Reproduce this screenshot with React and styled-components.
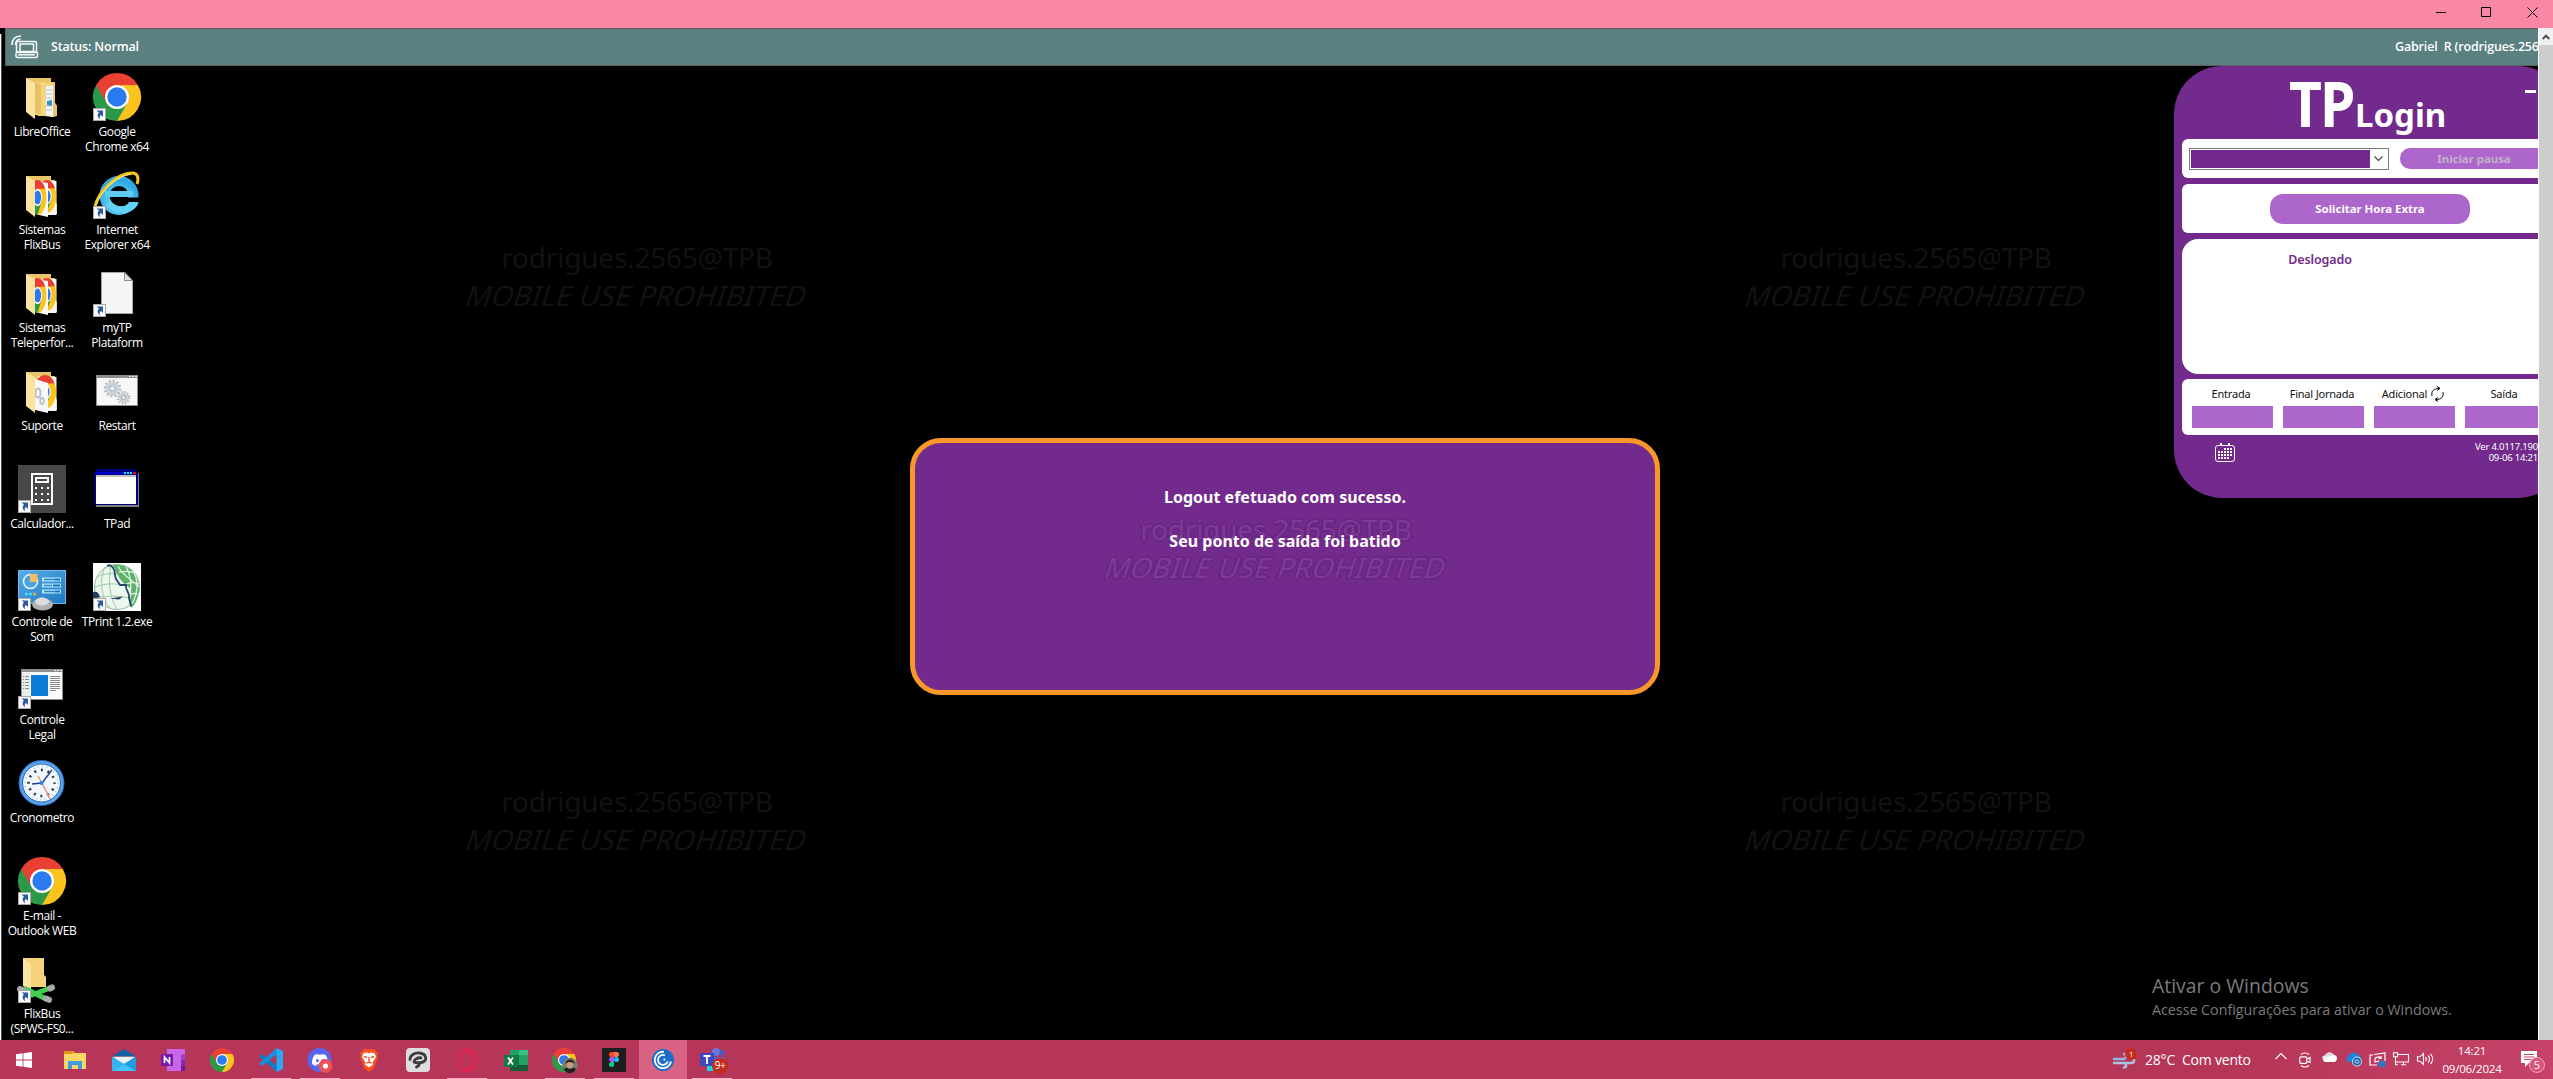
import React from 'react';
import styled, { createGlobalStyle, css } from 'styled-components';
import { SiDiscord } from 'react-icons/si';

const GlobalStyle = createGlobalStyle`
  *, *::before, *::after { box-sizing: border-box; }
  body { margin: 0; background: #000; overflow: hidden; }
  svg { display: block; flex: none; overflow: visible; }
`;

const ui = `'Open Sans', 'Noto Sans', sans-serif`;
const tahoma = `'Noto Sans', 'Open Sans', sans-serif`;
const PURPLE = '#722a8c';
const LILAC = '#ad66cb';

/* ---------- window frame ---------- */

const Screen = styled.div`
  display: flex;
  flex-direction: column;
  width: 2553px;
  height: 1079px;
  background: #000;
  font-family: ${ui};
  overflow: hidden;
`;

const TitleBar = styled.header`
  flex: none;
  display: flex;
  justify-content: flex-end;
  align-items: flex-start;
  gap: 35px;
  height: 28px;
  padding: 7px 15px 0 0;
  background: #f987a5;
`;

const Viewport = styled.div`
  flex: 1;
  min-height: 0;
  display: flex;
`;

const LeftEdge = styled.div`
  flex: none;
  width: 5px;
  padding-top: 6px;
  &::before {
    content: '';
    display: block;
    width: 2px;
    height: 100%;
    background: #fff;
    border-right: 1px solid #4a4f4f;
  }
`;

const Session = styled.main`
  flex: 1;
  min-width: 0;
  display: flex;
  flex-direction: column;
  overflow: hidden;
`;

const Scrollbar = styled.div`
  flex: none;
  display: flex;
  flex-direction: column;
  width: 15px;
  border-left: 1px solid #fff;
  background: #cdcdcd;
`;

const ScrollButton = styled.div`
  display: flex;
  align-items: center;
  justify-content: center;
  height: 17px;
  background: #f0f0f0;
`;

const StatusBar = styled.div`
  flex: none;
  display: flex;
  align-items: center;
  height: 38px;
  padding-left: 5px;
  background: #5a8080;
  border: 1px solid #5e5e5e;
  border-right: 0;
  overflow: hidden;
`;

const StatusText = styled.span`
  margin-left: 12px;
  color: #fff;
  font: 600 12.5px/18px ${ui};
  letter-spacing: -0.17px;
  white-space: pre;
`;

const UserText = styled(StatusText)`
  margin-left: auto;
  flex: none;
  width: 143px;
  overflow: hidden;
`;

/* ---------- desktop ---------- */

const Desktop = styled.div`
  position: relative;
  flex: 1;
  min-height: 0;
  overflow: hidden;
`;

const IconGrid = styled.div`
  display: grid;
  grid-auto-flow: column;
  grid-template-rows: repeat(10, 98px);
  grid-auto-columns: 75px;
  padding-top: 7px;
`;

const Shortcut = styled.div`
  display: flex;
  flex-direction: column;
  align-items: center;
  padding-right: 1px;
`;

const ShortcutLabel = styled.span`
  margin: 3px -6px 0;
  color: #fff;
  font: 400 12px/15px ${ui};
  letter-spacing: -0.42px;
  text-align: center;
  white-space: pre;
`;

const Mark = styled.div`
  position: absolute;
  left: ${(p) => p.$x - 5}px;
  top: ${(p) => p.$y - 66}px;
  width: 360px;
  margin-left: -180px;
  text-align: center;
  white-space: nowrap;
  color: ${(p) => (p.$tint ? '#7d3a96' : '#121212')};
  ${(p) => p.$tint && css`
    text-shadow: 2px 0 #6a2683, -2px 0 #6a2683, 0 2px #6a2683, 0 -2px #6a2683,
      1px 1px #6a2683, -1px 1px #6a2683, 1px -1px #6a2683, -1px -1px #6a2683;
  `}
`;

const MarkUser = styled.div`
  font: 400 28px/38px ${tahoma};
  letter-spacing: -0.2px;
`;

const MarkRule = styled.div`
  font: 400 28px/38px ${tahoma};
  letter-spacing: 0.15px;
  transform: skewX(-18deg);
`;

const Dialog = styled.section`
  position: absolute;
  left: 905px;
  top: 372px;
  width: 750px;
  height: 257px;
  border: 5px solid #f9972b;
  border-radius: 31px;
  background: ${PURPLE};
`;

const DialogText = styled.div`
  position: absolute;
  left: 905px;
  top: 420px;
  width: 750px;
  display: flex;
  flex-direction: column;
  gap: 22px;
  text-align: center;
  color: #fff;
  font: 700 16px/22px ${tahoma};
`;

const Activate = styled.div`
  position: absolute;
  left: 2147px;
  top: 905px;
  color: #7b7b7b;
  white-space: nowrap;
`;

const ActivateTitle = styled.div`
  font: 400 19.4px/30px ${ui};
`;

const ActivateHint = styled.div`
  font: 400 14.25px/17px ${ui};
`;

/* ---------- TP Login ---------- */

const LoginWindow = styled.section`
  position: absolute;
  left: 2169px;
  top: 0;
  width: 392px;
  height: 432px;
  padding: 0 8px;
  display: flex;
  flex-direction: column;
  border-radius: 48px;
  background: ${PURPLE};
  color: #fff;
  font-family: ${tahoma};
`;

const LoginHeader = styled.div`
  display: flex;
  align-items: flex-start;
  height: 73px;
  padding-left: 107px;
`;

const Brand = styled.span`
  width: 66px;
  font: 700 62px/62px ${tahoma};
  letter-spacing: -2px;
  padding-top: 6px;
  transform: scaleX(0.92);
  transform-origin: left;
`;

const BrandSub = styled.span`
  font: 700 33px/40px ${tahoma};
  padding-top: 29px;
`;

const Minimise = styled.span`
  margin: 24px 22px 0 auto;
  width: 11px;
  height: 3px;
  background: #fff;
`;

const Panel = styled.div`
  display: flex;
  gap: ${(p) => p.$cols || 0}px;
  height: ${(p) => p.$h}px;
  margin-bottom: ${(p) => p.$gap}px;
  padding: ${(p) => p.$pad || '0'};
  border-radius: ${(p) => p.$r || 6}px;
  background: #fff;
`;

const Select = styled.div`
  display: flex;
  width: 200px;
  height: 22px;
  padding: 1px;
  border: 1px solid #7a7a7a;
  background: #fff;
`;

const SelectValue = styled.div`
  width: 179px;
  background: ${PURPLE};
`;

const SelectArrow = styled.div`
  flex: 1;
  display: flex;
  align-items: center;
  justify-content: center;
`;

const Pill = styled.button`
  width: ${(p) => p.$w}px;
  height: ${(p) => p.$h}px;
  padding: 0;
  border: 0;
  border-radius: ${(p) => p.$r}px;
  background: ${LILAC};
  color: ${(p) => (p.disabled ? '#c3b3c9' : '#fff')};
  font: 700 11.4px/14px ${tahoma};
`;

const State = styled.span`
  width: 276px;
  color: ${PURPLE};
  text-align: center;
  font: 600 12.5px/18px ${tahoma};
  letter-spacing: -0.1px;
`;

const Slot = styled.div`
  display: flex;
  flex-direction: column;
  width: 81px;
`;

const SlotLabel = styled.span`
  display: flex;
  justify-content: center;
  align-items: center;
  gap: 4px;
  height: 24px;
  padding: 6px 3px 0 0;
  color: #111;
  font: 400 11px/14px ${tahoma};
  letter-spacing: -0.2px;
  white-space: nowrap;
`;

const SlotValue = styled.div`
  height: 22px;
  margin-top: 3px;
  background: ${LILAC};
`;

const LoginFooter = styled.div`
  display: flex;
  justify-content: space-between;
  padding: 8px 20px 0 33px;
`;

const Version = styled.div`
  margin-top: -2px;
  text-align: right;
  font: 400 9.5px/11px ${tahoma};
  letter-spacing: -0.2px;
`;

/* ---------- taskbar ---------- */

const Taskbar = styled.footer`
  flex: none;
  display: flex;
  height: 39px;
  background: linear-gradient(90deg, #b63659 0, #b63659 2250px, #c64268 2553px);
`;

const Pinned = styled.div`
  display: flex;
  gap: 1px;
`;

const TaskButton = styled.div`
  display: flex;
  align-items: center;
  justify-content: center;
  width: 48px;
  margin-right: ${(p) => (p.$wide ? 2 : 0)}px;
  padding-top: 1px;
  background: ${(p) => (p.$active ? '#d76283' : 'transparent')};
  ${(p) => p.$open && css`
    background: linear-gradient(#f4b3c6, #f4b3c6) center bottom / 40px 1px no-repeat;
  `}
`;

const Tray = styled.div`
  display: flex;
  align-items: center;
  margin-left: auto;
  padding-right: 2px;
  color: #fff;
`;

const Weather = styled.div`
  display: flex;
  align-items: center;
  gap: 9px;
  width: 158px;
  font: 400 14px/20px ${ui};
  letter-spacing: -0.2px;
  white-space: pre;
`;

const TrayIcons = styled.div`
  display: flex;
  width: 168px;
  margin-left: -2px;
`;

const TrayCell = styled.div`
  display: flex;
  justify-content: center;
  width: 24px;
`;

const Clock = styled.div`
  width: 72px;
  padding-right: 2px;
  text-align: center;
  font: 400 11.5px/17.5px ${ui};
  letter-spacing: -0.2px;
`;

const Notices = styled.div`
  display: flex;
  justify-content: center;
  width: 42px;
`;

/* ---------- drawings ---------- */

const Arrow = () => (
  <g>
    <rect x="0.5" y="35.5" width="12" height="12" fill="#fafafa" stroke="#a9a9a9" />
    <path d="M3.6 37.4H10V44l-2-2c-1.400 1-1.600 2.400-1 4.200-2.800-1.800-3-4.700-1-6.600z" fill="#2d5a9e" />
  </g>
);

const ChromeDisc = () => (
  <g>
    <path d="M24 24L3.200 12A24 24 0 0 1 44.800 12z" fill="#ea4033" />
    <path d="M24 24L44.800 12A24 24 0 0 1 24 48z" fill="#fcc31e" />
    <path d="M24 24L24 48A24 24 0 0 1 3.200 12z" fill="#2a9a48" />
    <path d="M24 12H44.800L34.400 30z" fill="#fcc31e" />
    <path d="M3.200 12L13.600 30 24 24 20 14z" fill="#2a9a48" />
    <path d="M3.200 12L13.600 30 16 16 30 12z" fill="#ea4033" />
    <path d="M34.400 30L24 48 13.600 30z" fill="#2a9a48" />
    <circle cx="24" cy="24" r="12" fill="#fff" />
    <circle cx="24" cy="24" r="9.700" fill="#2b7bf0" />
  </g>
);

const ChromeIcon = ({ size = 48, link }) => (
  <svg width={size} height={size} viewBox="0 0 48 48">
    <ChromeDisc />
    {link && <Arrow />}
  </svg>
);

const ClippedSvg = styled.svg`
  overflow: hidden;
`;

const FolderIcon = ({ kind }) => (
  <svg width="48" height="48" viewBox="0 0 48 48">
    <path d="M8 5H33V9H37V30L39 33V43H20z" fill="#e9c566" />
    {kind === 'docs' && (
      <g>
        <path d="M17 9l18 1v34l-18-2z" fill="#f3d582" />
        <path d="M17 9l6 3v30l-6-2z" fill="#e6c263" />
        <path d="M28 13h7v31l-7-2z" fill="#f1f5f8" />
        <path d="M28 17h6M28 21h6M28 25h6M28 33h6M28 37h6" stroke="#b7c2cc" />
        <path d="M29 28l5-1v6l-5-1z" fill="#2d8fc4" />
        <path d="M35 11h2v19l2 3v10l-4 1z" fill="#e9c566" />
      </g>
    )}
    {kind === 'chrome' && (
      <g>
        <path d="M17 10L38.500 10V44H30L17 40z" fill="#f5f5f5" />
        <g transform="translate(19.500 9) scale(.39 .68)"><ChromeDisc /></g>
        <path d="M17 10l13 2v34l-13-3z" fill="#f8f8f8" />
        <ClippedSvg x="17" y="9" width="12.500" height="35" viewBox="14 0 34 48" preserveAspectRatio="none">
          <g transform="translate(-3 0)"><ChromeDisc /></g>
        </ClippedSvg>
      </g>
    )}
    {kind === 'gears' && (
      <g>
        <path d="M20 9L38.500 10V44H28z" fill="#f5f5f5" />
        <g transform="translate(16 8) scale(.46 .7)"><ChromeDisc /></g>
        <path d="M17 12l13 4v30l-13-3z" fill="#f8f8f8" />
        <ellipse cx="20" cy="26" rx="2.500" ry="4.500" fill="none" stroke="#b9c3cb" strokeWidth="2" />
        <ellipse cx="24" cy="34" rx="1.800" ry="3" fill="none" stroke="#b9c3cb" strokeWidth="1.800" />
      </g>
    )}
    <path d="M8 5l9 5v36L8 39z" fill="#fde3a0" />
  </svg>
);

const InternetIcon = () => (
  <svg width="48" height="48" viewBox="0 0 48 48">
    <defs>
      <radialGradient id="ie" cx=".5" cy=".7" r=".7">
        <stop offset="0" stopColor="#8aeaff" />
        <stop offset="1" stopColor="#2fa8e4" />
      </radialGradient>
    </defs>
    <circle cx="26" cy="24.500" r="14.500" fill="none" stroke="url(#ie)" strokeWidth="10" />
    <path d="M12 20h28v6H12z" fill="#5ecbf2" />
    <path d="M17 26.500H46.500V31H38c-2 3-5 4.500-9 4.500-6 0-11-4-12-9z" fill="#000" />
    <path d="M13 33c4 11 26 13 32 0l.3-2H36c-3 6-14 6-19 0z" fill="#63d4f7" />
    <path d="M2 36C4 22 24 2 39 2c6 0 7 5 5 11" fill="none" stroke="#f7c81c" strokeWidth="3" />
    <path d="M4 33C7 21 25 4 38 3.500" fill="none" stroke="#fff08a" strokeWidth="1" />
    <Arrow />
  </svg>
);

const PageIcon = () => (
  <svg width="48" height="48" viewBox="0 0 48 48">
    <path d="M8.500 3.500H32l7.500 8V44.500h-31z" fill="#f4f5f7" stroke="#a5a5a5" />
    <path d="M31.500 3.500v8h8z" fill="#ddd" stroke="#8d8d8d" />
    <Arrow />
  </svg>
);

const Gear = ({ cx, cy, r }) => (
  <g>
    <circle cx={cx} cy={cy} r={r} fill="none" stroke="#aeb8bf" strokeWidth="3" strokeDasharray={`${r * 0.26} ${r * 0.2636}`} />
    <circle cx={cx} cy={cy} r={r * 0.66} fill="none" stroke="#ccd3d8" strokeWidth={r * 0.55} />
    <circle cx={cx} cy={cy} r={r * 0.36} fill="#fafafa" stroke="#98a4ac" />
  </g>
);

const RestartIcon = () => (
  <svg width="48" height="48" viewBox="0 0 48 48">
    <rect x="3.500" y="8.500" width="41" height="30" fill="#f7f7f7" stroke="#8b8e91" />
    <path d="M3 8h42v3H3z" fill="#8b8e91" />
    <path d="M36 9.500h8" stroke="#e8e8e8" strokeDasharray="2 1" />
    <Gear cx={19.500} cy={21.500} r={7.300} />
    <Gear cx={30.500} cy={30.500} r={5.300} />
  </svg>
);

const CalculatorIcon = () => (
  <svg width="48" height="48" viewBox="0 0 48 48">
    <path d="M0 0h48v48H0z" fill="#484848" />
    <path d="M14 9h20v30H14z" fill="none" stroke="#fff" strokeWidth="2" />
    <path d="M18 13h12v4H18z" fill="none" stroke="#fff" strokeWidth="2" />
    <path d="M17 23h14M17 29h14M17 35h14" stroke="#fff" strokeWidth="2" strokeDasharray="2 4" />
    <Arrow />
  </svg>
);

const TPadIcon = () => (
  <svg width="48" height="48" viewBox="0 0 48 48">
    <path d="M3 8h43v34H3z" fill="#7d7d7d" />
    <path d="M3 4h40v3h2v33H1V7h2z" fill="#00007f" />
    <path d="M3 10h40v29H3z" fill="#fff" />
    <path d="M3 10h40v2H3z" fill="#c3c3c3" />
    <path d="M4 8h27" stroke="#0000e6" strokeWidth="2" strokeDasharray="3 1" />
    <path d="M31 8h9" stroke="#00f0ff" strokeWidth="2" strokeDasharray="2 1" />
    <path d="M40 8h3" stroke="#f00" strokeWidth="2" />
  </svg>
);

const SoundPanelIcon = () => (
  <svg width="48" height="48" viewBox="0 0 48 48">
    <defs>
      <linearGradient id="snd" x2="1" y2="1">
        <stop offset="0" stopColor="#55aee6" />
        <stop offset="1" stopColor="#2179c0" />
      </linearGradient>
    </defs>
    <rect x=".5" y="7.500" width="47" height="33" fill="url(#snd)" stroke="#6dbcf0" />
    <circle cx="12.500" cy="18.500" r="7" fill="#4ba3dc" stroke="#e9f6ff" strokeWidth="1.500" />
    <path d="M12 11h7.500v8H12z" fill="#f8bb65" />
    <path d="M24 16.500h19M24 22.500h19M24 28.500h19" stroke="#b4e4fb" strokeWidth="4" />
    <path d="M26 16.500h11M26 22.500h8M26 28.500h11" stroke="#2c86c8" strokeWidth="1.500" />
    <path d="M37 16.500h5M35 22.500h7M37 28.500h5" stroke="#1773b8" strokeWidth="2" />
    <circle cx="8.500" cy="31" r="1.500" fill="#40e4ff" />
    <circle cx="12.500" cy="31" r="1.500" fill="#40e4ff" />
    <circle cx="16.500" cy="31" r="1.500" fill="#ffa643" />
    <ellipse cx="24.500" cy="41.500" rx="10.500" ry="6" fill="#b0b0b0" />
    <ellipse cx="24" cy="38.500" rx="7" ry="4" fill="#dcdcdc" />
    <Arrow />
  </svg>
);

const GlobeIcon = () => (
  <svg width="48" height="48" viewBox="0 0 48 48">
    <path d="M0 0h48v48H0z" fill="#fff" />
    <circle cx="24" cy="24" r="22.500" fill="#eef7ef" stroke="#8fb79a" />
    <path d="M20 2c20-2 27 14 26 26-1 8-4 14-8 17-4-8 1-14-1-20-6-4-10-8-13-14z" fill="#5cb26a" />
    <path d="M25 3c4 9 12 12 21 21M33 4c5 8 6 20 3 36M40 8c5 8 6 20-1 33M26 9c6-1 12-1 16 1M33 21c6-2 10-2 13 0M36 32c4-2 6-2 9-1" fill="none" stroke="#e3f3e4" strokeWidth="1.300" />
    <path d="M12 4C6 16 8 36 18 46M18 2c-3 14-2 32 6 44M4 14c8-4 14-4 22-2M2 24c10-4 20-4 32-1M4 35c10-3 20-2 33 0" fill="none" stroke="#9cc8a4" />
    <path d="M14 3c5-3 8 4 8 9 0 6 4 7 5 10l6 0c-1 6 4 6 3 13l2 8" fill="none" stroke="#24476b" strokeWidth="1.800" />
    <path d="M0 29c4-1 6 1 7 5l-7 2zM17 35.500l13-2-4 3z" fill="#1d3f66" />
    <Arrow />
  </svg>
);

const LegalIcon = () => (
  <svg width="48" height="48" viewBox="0 0 48 48">
    <rect x="3.500" y="8.500" width="41" height="30" fill="#fbfbfb" stroke="#8b8e91" />
    <path d="M3 8h42v3H3z" fill="#8b8e91" />
    <path d="M36 9.500h8" stroke="#e8e8e8" strokeDasharray="2 1" />
    <path d="M4 12h8v26H4z" fill="#ececec" />
    <path d="M5 15.500h6M5 18.500h6M5 21.500h6M5 24.500h6M5 27.500h6" stroke="#8b8b8b" strokeDasharray="1 1 4 0" />
    <path d="M13 14h17v21H13z" fill="#0c7cd8" />
    <path d="M32 15.500h10M32 17.500h10M32 19.500h10M32 21.500h10M32 23.500h10M32 25.500h10M32 27.500h10M32 29.500h6" stroke="#8b8b8b" />
    <Arrow />
  </svg>
);

const ClockIcon = () => (
  <svg width="48" height="48" viewBox="0 0 48 48">
    <circle cx="23.500" cy="24" r="21" fill="#f1f8ff" stroke="#5ba3ea" strokeWidth="3.500" />
    <circle cx="23.500" cy="24" r="22.500" fill="none" stroke="#1559ad" strokeWidth=".8" />
    <circle cx="23.500" cy="24" r="19" fill="none" stroke="#2260ad" strokeWidth="1" />
    <circle cx="23.500" cy="24" r="16.500" fill="none" stroke="#a3c4ea" strokeWidth="1.500" strokeDasharray="1 3.320" />
    <circle cx="23.500" cy="24" r="13" fill="none" stroke="#333" strokeWidth="2.600" strokeDasharray="2 4.807" strokeDashoffset="1" />
    <path d="M24 24L14 25M24 24L34 11" stroke="#2b3c98" strokeWidth="1.400" />
    <path d="M20 17l4 7 8 16" fill="none" stroke="#f28a6a" strokeWidth="1.400" />
    <circle cx="23.500" cy="24" r="2" fill="#2a86e6" />
  </svg>
);

const NetFolderIcon = () => (
  <svg width="48" height="48" viewBox="0 0 48 48">
    <path d="M5 3H26V20L28 22V32H13z" fill="#f4d37a" />
    <path d="M5 3l8 6v26l-8-4z" fill="#fde3a0" />
    <path d="M8 34l20 10M14 40l18-7" stroke="#43cf4d" strokeWidth="5" strokeLinecap="round" />
    <path d="M28 43.500l3 1.300M32 33.500l2-1M2 34l3 1" stroke="#a8a8a8" strokeWidth="6" strokeLinecap="round" />
    <Arrow />
  </svg>
);

const MirrorIcon = () => (
  <svg width="28" height="24" viewBox="0 0 28 24" fill="none" stroke="#f6fafa" strokeWidth="1.500">
    <rect x="5.500" y="6.500" width="20" height="11" rx="1.500" />
    <rect x="9" y="9" width="13.500" height="7.500" />
    <rect x="5" y="17" width="21.500" height="5.500" rx="1.500" />
    <path d="M7 19.800h17" />
    <path d="M1 10C1 4 4 1 10 1M4.500 10c0-3.500 1.500-5.500 5-6" strokeWidth="1.700" />
  </svg>
);

const CaptionGlyph = ({ d }) => (
  <svg width="11" height="11" viewBox="0 0 11 11" fill="none" stroke="#000"><path d={d} /></svg>
);

const RefreshGlyph = () => (
  <svg width="13" height="16" viewBox="0 0 13 16" fill="none" stroke="#000" strokeWidth="1">
    <path d="M1 10C0 5 3 2.500 8 2.500M6 .5l3 2-3 2M12 6c1 5-2 7.500-7 7.500M7 15.500l-3-2 3-2" />
  </svg>
);

const CalendarGlyph = () => (
  <svg width="20" height="19" viewBox="0 0 20 19" fill="none" stroke="#fff">
    <rect x=".5" y="2.500" width="19" height="16" rx="2.500" />
    <path d="M6 0v3M14 0v3" strokeWidth="2" />
    <path d="M9 6h8M3 9h14M3 12h14M3 15h11" strokeWidth="2" strokeDasharray="2 1" />
  </svg>
);

const WindowsLogo = () => (
  <svg width="16" height="16" viewBox="0 0 16 16" fill="#fff">
    <path d="M0 2.200l6.600-.9v6.200H0zM7.400 1.200L16 0v7.500H7.400zM0 8.400h6.600v6.300L0 13.800zM7.400 8.400H16V16l-8.600-1.200z" />
  </svg>
);

const ExplorerLogo = () => (
  <svg width="22" height="19" viewBox="0 0 22 19">
    <path d="M0 0h9l2 2h11v16H0z" fill="#fbd667" />
    <path d="M0 0h9l1 2-2 1H0z" fill="#d99a15" />
    <path d="M4 18v-8h14v8h-4v-4H8v4z" fill="#3f9bdc" />
  </svg>
);

const MailLogo = () => (
  <svg width="24" height="22" viewBox="0 0 24 22">
    <path d="M0 7.500L12 0l12 7.500z" fill="#1160a6" />
    <path d="M2 8h20l-5 7H7z" fill="#eef1f4" />
    <path d="M0 7.500L24 22H0z" fill="#34b5ee" />
    <path d="M24 7.500V22H0z" fill="#1d9ee2" />
    <path d="M0 22l12-7 12 7z" fill="#42c4f4" />
    <path d="M1 7.800h22L12 14.500z" fill="#eef1f4" />
  </svg>
);

const OneNoteLogo = () => (
  <svg width="24" height="22" viewBox="0 0 24 22">
    <path d="M6 0h18v22H6z" fill="#c966e8" />
    <path d="M20 5.500h4V11h-4z" fill="#a33cc9" />
    <path d="M20 11h4v5.500h-4z" fill="#8a28b4" />
    <path d="M20 16.500h4V22h-4z" fill="#6f1795" />
    <path d="M0 5h12v12H0z" fill="#7719aa" />
    <path d="M3.500 14V8l5 6V8" fill="none" stroke="#fff" strokeWidth="1.700" />
  </svg>
);

const CodeLogo = () => (
  <svg width="24" height="24" viewBox="0 0 24 24">
    <path d="M1 7.500L3 6l15 12v6L1 9.500z" fill="#0a7dc4" />
    <path d="M1 16.500L3 18 18 6V0L1 14.500z" fill="#1490dc" />
    <path d="M17.500 0L24 3v18l-6.500 3z" fill="#2aa8f2" />
  </svg>
);

const DiscordLogo = () => (
  <svg width="26" height="26" viewBox="0 0 26 26">
    <circle cx="12.500" cy="13" r="12" fill="#5865f2" />
    <SiDiscord x="5" y="5" width="15" height="15" color="#fff" />
    <circle cx="18.500" cy="19" r="7" fill="#ec5154" />
    <circle cx="18.500" cy="19" r="2.600" fill="#fff" />
  </svg>
);

const BraveLogo = () => (
  <svg width="20" height="24" viewBox="0 0 20 24">
    <path d="M5 1h10l4 4-1 3 1 1-4 11-5 4-5-4L1 9l1-1-1-3z" fill="#f9501e" />
    <path d="M4.500 5L8 4.500l2 1 2-1 3.500.5L17 9l-3.500 5.500.5 2-4 3-4-3 .5-2L3 9z" fill="#fff" />
    <path d="M5 8.500l3 1M15 8.500l-3 1M10 9v5M7.500 15l2.500-1 2.500 1" fill="none" stroke="#f9501e" strokeWidth="1.400" />
  </svg>
);

const ClipLogo = () => (
  <svg width="24" height="24" viewBox="0 0 24 24">
    <rect width="24" height="24" rx="4" fill="#dedede" />
    <path d="M4 11.500C4 7 9 4.500 13.500 5c7.500.8 8.500 8.500 1.500 9.500-3.500.5-5 .5-7-.5 0-2.500 3-4.500 7-4.200M13 15.500c1 1.500-.5 2.500-2.500 3.500" fill="none" stroke="#3b3b3b" strokeWidth="2.800" strokeLinecap="round" strokeLinejoin="round" />
  </svg>
);

const OperaLogo = () => (
  <svg width="24" height="24" viewBox="0 0 24 24" fill="none" stroke="#f21f4d" strokeWidth="1.100">
    <circle cx="12" cy="12" r="11.300" />
    <ellipse cx="12" cy="12" rx="5" ry="9.500" />
    <path d="M8.500 4.500C13 0 19 5 19 12s-6 12-10.500 7.500" />
  </svg>
);

const ExcelLogo = () => (
  <svg width="24" height="21" viewBox="0 0 24 21">
    <path d="M6 0h18v21H6z" fill="#21a366" />
    <path d="M15 0h9v5h-9z" fill="#33c481" />
    <path d="M6 5h9v10H6z" fill="#107c41" />
    <path d="M6 15h18v6H6z" fill="#185c37" />
    <path d="M0 5h13v12H0z" fill="#107c41" />
    <path d="M4 7.500l5 7M9 7.500l-5 7" stroke="#fff" strokeWidth="1.700" />
  </svg>
);

const ChromeProfile = () => (
  <svg width="26" height="26" viewBox="0 0 26 26">
    <g transform="translate(0 1) scale(.5)"><ChromeDisc /></g>
    <circle cx="18" cy="18.500" r="7.700" fill="#77806f" />
    <path d="M11.500 22.500c2-2 4-2 6.500-2s5 0 6 2c-3 5-9.500 5-12.500 0z" fill="#24231f" />
    <ellipse cx="18" cy="17.500" rx="3.300" ry="4.200" fill="#c49a80" />
    <path d="M13.500 17c0-6 9-6 9 0-2-2-6-3-9 0z" fill="#2c2018" />
  </svg>
);

const FigmaLogo = () => (
  <svg width="24" height="24" viewBox="0 0 24 24">
    <path d="M0 0h24v24H0z" fill="#1e1e1e" />
    <path d="M12 4H9.500a2.500 2.500 0 0 0 0 5H12z" fill="#f24e1e" />
    <path d="M12 4h2.500a2.500 2.500 0 0 1 0 5H12z" fill="#ff7262" />
    <path d="M12 9H9.500a2.500 2.500 0 0 0 0 5H12z" fill="#a259ff" />
    <circle cx="14.500" cy="11.500" r="2.500" fill="#1abcfe" />
    <path d="M12 14H9.500a2.500 2.500 0 1 0 2.500 2.500z" fill="#0acf83" />
  </svg>
);

const WorkspaceLogo = () => (
  <svg width="22" height="22" viewBox="0 0 22 22" fill="none" stroke="#fff" strokeWidth="1.800">
    <circle cx="11" cy="11" r="11" fill="#1a6cc6" stroke="none" />
    <path d="M12 2.800A8.200 8.200 0 1 0 19 12.500M13 6.300A5 5 0 1 0 15.700 12.500M11.500 10.500h1.700" />
  </svg>
);

const TeamsBadge = styled.div`
  position: relative;
  left: 1px;
  width: 26px;
  height: 24px;
`;

const BadgeCount = styled.span`
  position: absolute;
  right: -2px;
  bottom: -2px;
  width: 16px;
  height: 16px;
  border-radius: 8px;
  background: #c42b1c;
  color: #fff;
  text-align: center;
  font: 400 10.5px/15px ${ui};
  letter-spacing: -0.5px;
`;

const TeamsLogo = () => (
  <TeamsBadge>
    <svg width="26" height="24" viewBox="0 0 26 24">
      <circle cx="16" cy="4" r="4" fill="#6a76e0" />
      <circle cx="22" cy="5" r="2.800" fill="#4d59c9" />
      <path d="M10 9h15v7c0 6-13 8-15 1z" fill="#5661cf" />
      <path d="M7 17h8v6H7z" fill="#18d9e8" />
      <path d="M0 5h14v13H0z" fill="#3d48bb" />
      <path d="M3.500 8h7M7 8v8" stroke="#fff" strokeWidth="1.800" />
    </svg>
    <BadgeCount>9+</BadgeCount>
  </TeamsBadge>
);

const WeatherBadge = styled(TeamsBadge)`
  left: 0;
  width: 23px;
  height: 20px;
`;

const WeatherCount = styled(BadgeCount)`
  right: -1px;
  top: -2px;
  width: 12px;
  height: 12px;
  font: 400 8px/12px ${ui};
`;

const WindIcon = () => (
  <WeatherBadge>
    <svg width="23" height="20" viewBox="0 0 23 20" fill="none" strokeWidth="2.400" strokeLinecap="round">
      <path d="M1 9h9c4 0 4-4.500 1-5" stroke="#8fb8e0" />
      <path d="M1 13h17c4 0 4-4 1-4M10 13c4 0 4 4 1 4.500" stroke="#a9c3dd" />
    </svg>
    <WeatherCount>1</WeatherCount>
  </WeatherBadge>
);

const ChevronUp = () => (
  <svg width="12" height="8" viewBox="0 0 12 8" fill="none" stroke="#fff" strokeWidth="1.200"><path d="M.5 7L6 1.500 11.500 7" /></svg>
);

const MeetIcon = () => (
  <svg width="12" height="16" viewBox="0 0 12 16" fill="none" stroke="#fff" strokeWidth="1.200">
    <rect x=".8" y="4.800" width="7" height="6.500" rx="1" />
    <path d="M8 7l3-1.500v5L8 9.500M2 2.500C4 .5 8 .5 10 2.500M2 13.500c2 2 6 2 8 0" />
  </svg>
);

const CLOUD = 'M4 10a3.500 3.500 0 0 1 0-6.500C6-.5 11-.5 12.500 3c3 0 4 2.500 3.300 4.500S14 10 13 10z';

const CloudIcon = () => (
  <svg width="17" height="11" viewBox="0 0 17 11"><path d={CLOUD} fill="#fff" /><path d="M1 6l9-2 3-1C11-.5 6-.5 4 3.500 2 3.500.8 4.500 1 6z" fill="#dcdce4" /></svg>
);

const CloudSyncIcon = () => (
  <svg width="17" height="14" viewBox="0 0 17 14">
    <path d={CLOUD} fill="#1a86dc" />
    <circle cx="12" cy="9.500" r="4.500" fill="#0f64b8" stroke="#fff" strokeWidth=".8" />
    <path d="M9.800 9.500c.5-2 3.500-2 4 0M14.200 9.700c-.5 2-3.500 2-4.200 0" fill="none" stroke="#fff" />
  </svg>
);

const SessionIcon = () => (
  <svg width="17" height="16" viewBox="0 0 17 16" fill="none" stroke="#fff" strokeWidth="1.200">
    <path d="M5 2.500L16 1v8M8 13H1V3h3M6 7.500C6 5 10 4 11.500 6M12 4v2.500H9.500M10 8.500c-1 1.500-3 1.500-4 0v2" />
    <circle cx="13" cy="12" r="3.600" fill="#2f78c8" stroke="none" />
  </svg>
);

const NetworkIcon = () => (
  <svg width="16" height="14" viewBox="0 0 16 14" fill="none" stroke="#fff" strokeWidth="1.100">
    <path d="M5 2.500h10.500v7.500H5M8 12.800h5M10.500 10v3M.5 .8h4v4h-4zM2.500 5v8M2.500 12.800H5M2.500 10H5" />
  </svg>
);

const VolumeIcon = () => (
  <svg width="17" height="14" viewBox="0 0 17 14" fill="none" stroke="#fff" strokeWidth="1.100">
    <path d="M.5 4.800H3l3.500-3.300v11L3 9.200H.5zM8.500 5c1 1.200 1 2.800 0 4M11 3.500c2 2 2 5 0 7M13.500 2c2.800 3 2.800 7 0 10" />
  </svg>
);

const NoticeBadge = styled.div`
  position: relative;
  left: 2px;
  width: 22px;
  height: 24px;
  padding-top: 3px;
`;

const NoticeCount = styled(BadgeCount)`
  right: -2px;
  bottom: -1px;
  border: 1px solid #f3a2ba;
  background: #d9547c;
  font: 400 11px/14px ${ui};
  letter-spacing: 0;
`;

/* ---------- data ---------- */

const shortcuts = [
  ['LibreOffice', <FolderIcon kind="docs" />],
  ['Sistemas\nFlixBus', <FolderIcon kind="chrome" />],
  ['Sistemas\nTeleperfor...', <FolderIcon kind="chrome" />],
  ['Suporte', <FolderIcon kind="gears" />],
  ['Calculador...', <CalculatorIcon />],
  ['Controle de\nSom', <SoundPanelIcon />],
  ['Controle\nLegal', <LegalIcon />],
  ['Cronometro', <ClockIcon />],
  ['E-mail -\nOutlook WEB', <ChromeIcon link />],
  ['FlixBus\n(SPWS-FS0...', <NetFolderIcon />],
  ['Google\nChrome x64', <ChromeIcon link />],
  ['Internet\nExplorer x64', <InternetIcon />],
  ['myTP\nPlataform', <PageIcon />],
  ['Restart', <RestartIcon />],
  ['TPad', <TPadIcon />],
  ['TPrint 1.2.exe', <GlobeIcon />],
];

const tasks = [
  { icon: <WindowsLogo />, wide: true },
  { icon: <ExplorerLogo /> },
  { icon: <MailLogo /> },
  { icon: <OneNoteLogo /> },
  { icon: <ChromeIcon size={24} /> },
  { icon: <CodeLogo />, open: true },
  { icon: <DiscordLogo />, open: true },
  { icon: <BraveLogo /> },
  { icon: <ClipLogo /> },
  { icon: <OperaLogo />, open: true },
  { icon: <ExcelLogo /> },
  { icon: <ChromeProfile />, open: true },
  { icon: <FigmaLogo />, open: true },
  { icon: <WorkspaceLogo />, active: true },
  { icon: <TeamsLogo />, open: true },
];

const trayIcons = [ChevronUp, MeetIcon, CloudIcon, CloudSyncIcon, SessionIcon, NetworkIcon, VolumeIcon];

const marks = [
  [637, 238], [1916, 238], [1276, 510, true], [637, 782], [1916, 782],
];

export default function App() {
  return (
    <Screen>
      <GlobalStyle />
      <TitleBar>
        <CaptionGlyph d="M1 5.500h10" />
        <CaptionGlyph d="M.5 .5h9v9h-9z" />
        <CaptionGlyph d="M.5 .5l10 10M10.500 .5l-10 10" />
      </TitleBar>
      <Viewport>
        <LeftEdge />
        <Session>
          <StatusBar>
            <MirrorIcon />
            <StatusText>Status: Normal</StatusText>
            <UserText>Gabriel  R (rodrigues.2565)</UserText>
          </StatusBar>
          <Desktop>
            <IconGrid>
              {shortcuts.map(([label, icon]) => (
                <Shortcut key={label}>
                  {icon}
                  <ShortcutLabel>{label}</ShortcutLabel>
                </Shortcut>
              ))}
            </IconGrid>
            <Dialog />
            {marks.map(([x, y, tint]) => (
              <Mark key={`${x}-${y}`} $x={x} $y={y} $tint={tint}>
                <MarkUser>rodrigues.2565@TPB</MarkUser>
                <MarkRule>MOBILE USE PROHIBITED</MarkRule>
              </Mark>
            ))}
            <DialogText>
              <span>Logout efetuado com sucesso.</span>
              <span>Seu ponto de saída foi batido</span>
            </DialogText>
            <LoginWindow>
              <LoginHeader>
                <Brand>TP</Brand>
                <BrandSub>Login</BrandSub>
                <Minimise />
              </LoginHeader>
              <Panel $h={39} $gap={6} $cols={11} $pad="9px 10px 0 7px">
                <Select>
                  <SelectValue />
                  <SelectArrow>
                    <svg width="9" height="6" viewBox="0 0 9 6" fill="none" stroke="#444" strokeWidth="1.200"><path d="M.5 .5l4 4 4-4" /></svg>
                  </SelectArrow>
                </Select>
                <Pill disabled $w={148} $h={21} $r={10}>Iniciar pausa</Pill>
              </Panel>
              <Panel $h={49} $gap={6} $pad="10px 88px 0">
                <Pill $w={200} $h={30} $r={13}>Solicitar Hora Extra</Pill>
              </Panel>
              <Panel $h={135} $gap={5} $r={16} $pad="12px 0 0">
                <State>Deslogado</State>
              </Panel>
              <Panel $h={56} $gap={0} $cols={10} $pad="0 0 0 10px">
                <Slot><SlotLabel>Entrada</SlotLabel><SlotValue /></Slot>
                <Slot><SlotLabel>Final Jornada</SlotLabel><SlotValue /></Slot>
                <Slot><SlotLabel>Adicional<RefreshGlyph /></SlotLabel><SlotValue /></Slot>
                <Slot><SlotLabel>Saída</SlotLabel><SlotValue /></Slot>
              </Panel>
              <LoginFooter>
                <CalendarGlyph />
                <Version>Ver 4.0117.190<br />09-06 14:21</Version>
              </LoginFooter>
            </LoginWindow>
            <Activate>
              <ActivateTitle>Ativar o Windows</ActivateTitle>
              <ActivateHint>Acesse Configurações para ativar o Windows.</ActivateHint>
            </Activate>
          </Desktop>
        </Session>
        <Scrollbar>
          <ScrollButton>
            <svg width="8" height="6" viewBox="0 0 8 6" fill="none" stroke="#505050" strokeWidth="2"><path d="M.7 5L4 1.700 7.300 5" /></svg>
          </ScrollButton>
        </Scrollbar>
      </Viewport>
      <Taskbar>
        <Pinned>
          {tasks.map((t, i) => (
            <TaskButton key={i} $wide={t.wide} $open={t.open} $active={t.active}>{t.icon}</TaskButton>
          ))}
        </Pinned>
        <Tray>
          <Weather><WindIcon />28°C  Com vento</Weather>
          <TrayIcons>
            {trayIcons.map((Icon, i) => <TrayCell key={i}><Icon /></TrayCell>)}
          </TrayIcons>
          <Clock>14:21<br />09/06/2024</Clock>
          <Notices>
            <NoticeBadge>
              <svg width="16" height="16" viewBox="0 0 16 16"><path d="M0 0h16v12H8l-4 4v-4H0z" fill="#fff" /><path d="M3 3.500h10M3 6h10M3 8.500h7" stroke="#c64268" strokeWidth="1.100" /></svg>
              <NoticeCount>5</NoticeCount>
            </NoticeBadge>
          </Notices>
        </Tray>
      </Taskbar>
    </Screen>
  );
}
